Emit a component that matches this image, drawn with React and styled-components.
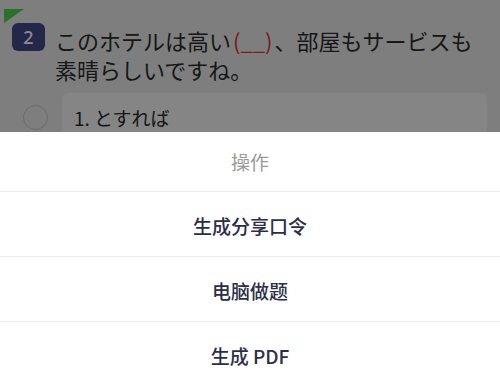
import React from 'react';
import styled, { createGlobalStyle } from 'styled-components';

const GlobalStyle = createGlobalStyle`
  html, body {
    margin: 0;
    padding: 0;
    background: #e6e6e6;
    font-family: "Noto Sans CJK JP", "Noto Sans", sans-serif;
    overflow: hidden;
  }
`;

const Page = styled.div`
  position: relative;
  height: 378px;
  background: #e6e6e6;
`;

const Corner = styled.div`
  position: absolute;
  left: 4px;
  top: 9px;
  width: 20px;
  height: 14px;
  background: #4ccf4c;
  clip-path: polygon(0 0, 100% 0, 0 100%);
`;

const Question = styled.div`
  display: flex;
  align-items: flex-start;
  gap: 10px;
  padding: 23px 16px 0 12px;
`;

const Badge = styled.div`
  flex: none;
  width: 33px;
  height: 28px;
  border-radius: 6px;
  background: #434587;
  color: #fff;
  display: flex;
  align-items: center;
  justify-content: center;
  font-family: "Noto Sans", sans-serif;
  font-size: 18px;
  font-weight: 500;
`;

const Stem = styled.div`
  margin-top: 3px;
  font-size: 22px;
  line-height: 29px;
  font-weight: 400;
  color: #2a2a2a;
`;

const Blank = styled.span`
  color: #d9363e;
  margin: 0 2px;
`;

const Option = styled.div`
  display: flex;
  align-items: center;
  gap: 14px;
  margin-top: 9px;
  padding: 0 13px 0 23px;
`;

const Radio = styled.div`
  flex: none;
  width: 23px;
  height: 23px;
  border-radius: 50%;
  border: 1.5px solid #c4c4c4;
`;

const OptionBox = styled.div`
  flex: 1;
  height: 48px;
  border-radius: 6px;
  background: #f3f3f3;
  display: flex;
  align-items: center;
  padding-left: 12px;
  font-size: 19px;
  color: #2a2a2a;
`;

const Mask = styled.div`
  position: absolute;
  inset: 0;
  background: rgba(0, 0, 0, 0.45);
`;

const Sheet = styled.div`
  position: absolute;
  left: 0;
  right: 0;
  top: 132px;
  background: #fff;
  font-family: "Noto Sans CJK SC", "Noto Sans", sans-serif;
`;

const SheetTitle = styled.div`
  height: 59px;
  display: flex;
  align-items: center;
  justify-content: center;
  font-size: 19px;
  color: #9a9a9a;
  border-bottom: 1px solid #efefef;
`;

const Action = styled.div`
  height: 65px;
  display: flex;
  align-items: center;
  justify-content: center;
  padding-top: 2px;
  box-sizing: border-box;
  font-size: 19px;
  font-weight: 500;
  color: #2c2e48;
  border-bottom: 1px solid #efefef;
`;

const actions = ['生成分享口令', '电脑做题', '生成 PDF'];

export default function App() {
  return (
    <Page>
      <GlobalStyle />
      <Corner />
      <Question>
        <Badge>2</Badge>
        <Stem>
          このホテルは高い<Blank>(__)</Blank>、部屋もサービスも<br />
          素晴らしいですね。
        </Stem>
      </Question>
      <Option>
        <Radio />
        <OptionBox>1. とすれば</OptionBox>
      </Option>
      <Mask />
      <Sheet>
        <SheetTitle>操作</SheetTitle>
        {actions.map((a) => (
          <Action key={a}>{a}</Action>
        ))}
      </Sheet>
    </Page>
  );
}
